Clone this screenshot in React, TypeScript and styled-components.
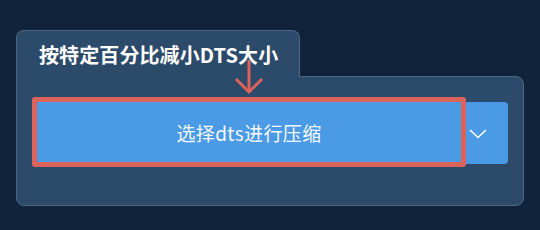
import React from 'react';
import styled, { createGlobalStyle } from 'styled-components';

const GlobalStyle = createGlobalStyle`
  html, body {
    margin: 0;
    padding: 0;
    background: #11233a;
  }
  body {
    font-family: "Noto Sans CJK SC", "Noto Sans", sans-serif;
  }
`;

const Page = styled.div`
  width: 540px;
  height: 230px;
  padding: 30px 0 0 16px;
  box-sizing: border-box;
`;

const Group = styled.div`
  position: relative;
  width: 508px;
`;

const Tab = styled.div`
  position: relative;
  z-index: 1;
  display: inline-block;
  box-sizing: border-box;
  width: 284px;
  height: 47px;
  padding: 10px 0 0 22px;
  margin-bottom: -1px;
  background: #2c4a6a;
  border: 1px solid #4c6687;
  border-bottom: none;
  border-radius: 8px 8px 0 0;
  color: #ffffff;
  font-size: 20px;
  font-weight: 700;
  line-height: 28px;
  letter-spacing: 0.1px;
`;

const Panel = styled.div`
  box-sizing: border-box;
  height: 130px;
  padding: 20px 0 0 15px;
  background: #2c4a6a;
  border: 1px solid #4c6687;
  border-radius: 0 8px 8px 8px;
`;

const SplitButton = styled.div`
  display: flex;
  align-items: flex-start;
`;

const MainButton = styled.button<{ $highlight?: boolean }>`
  box-sizing: border-box;
  width: 434px;
  height: 70px;
  padding: 0;
  background: #4b9ae5;
  border: 5px solid ${({ $highlight }) => ($highlight ? '#dc625c' : '#4b9ae5')};
  border-radius: 3px;
  color: #f4f8fd;
  font-family: "Noto Sans CJK SC", "Noto Sans", sans-serif;
  font-size: 19px;
  font-weight: 400;
  letter-spacing: 0.4px;
  cursor: pointer;
`;

const MenuButton = styled.button`
  display: flex;
  align-items: center;
  box-sizing: border-box;
  width: 42px;
  height: 62px;
  margin-top: 5px;
  padding: 0 0 0 3px;
  background: #4b9ae5;
  border: none;
  border-radius: 0 4px 4px 0;
  cursor: pointer;
`;

const Pointer = styled.svg`
  position: absolute;
  left: 218px;
  top: 28px;
  pointer-events: none;
  z-index: 2;
`;

const App: React.FC = () => (
  <>
    <GlobalStyle />
    <Page>
      <Group>
        <Tab>按特定百分比减小DTS大小</Tab>
        <Panel>
          <SplitButton>
            <MainButton $highlight>选择dts进行压缩</MainButton>
            <MenuButton aria-label="更多">
              <svg width="18" height="12" viewBox="0 0 18 12">
                <polyline
                  points="1,3 9,10.5 17,3"
                  fill="none"
                  stroke="#ffffff"
                  strokeWidth="1.6"
                />
              </svg>
            </MenuButton>
          </SplitButton>
        </Panel>
        <Pointer width="32" height="38" viewBox="0 0 32 38">
          <line x1="15" y1="2" x2="15" y2="34" stroke="#dc625c" strokeWidth="3" />
          <polyline
            points="2,21 15,34 28,21"
            fill="none"
            stroke="#dc625c"
            strokeWidth="3"
          />
        </Pointer>
      </Group>
    </Page>
  </>
);

export default App;
